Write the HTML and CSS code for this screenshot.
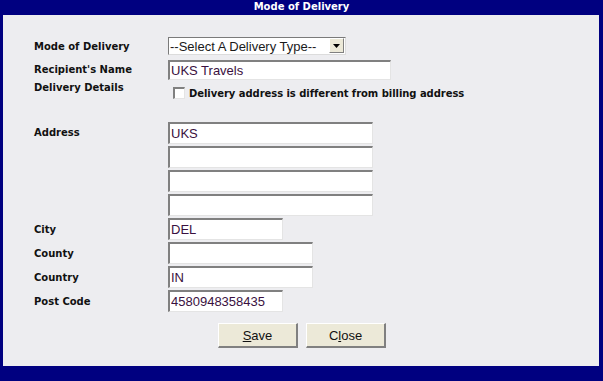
FILE: index.html
```html
<!DOCTYPE html>
<html lang="en">
<head>
    <meta charset="UTF-8">
    <title>Mode of Delivery</title>
    <link rel="stylesheet" href="styles.css">
</head>
<body>
    <div class="window">
        <div class="title-bar">Mode of Delivery</div>
        <form class="panel">
            <div class="row row-mode">
                <label class="field-label">Mode of Delivery</label>
                <div class="select-box">
                    <select name="delivery_type">
                        <option>--Select A Delivery Type--</option>
                    </select>
                    <span class="select-arrow">
                        <svg width="7" height="4" viewBox="0 0 7 4"><path d="M0 0h7L3.5 4z" fill="#000"/></svg>
                    </span>
                </div>
            </div>
            <div class="row row-name">
                <label class="field-label">Recipient's Name</label>
                <input type="text" class="text-input w-name" value="UKS Travels">
            </div>
            <div class="row row-details">
                <label class="field-label">Delivery Details</label>
                <div class="check-line">
                    <span class="checkbox"></span>
                    <span class="check-text">Delivery address is different from billing address</span>
                </div>
            </div>
            <div class="row row-address">
                <label class="field-label">Address</label>
                <div class="address-lines">
                    <input type="text" class="text-input w-address" value="UKS">
                    <input type="text" class="text-input w-address" value="">
                    <input type="text" class="text-input w-address" value="">
                    <input type="text" class="text-input w-address" value="">
                </div>
            </div>
            <div class="row row-field">
                <label class="field-label">City</label>
                <input type="text" class="text-input w-short" value="DEL">
            </div>
            <div class="row row-field">
                <label class="field-label">County</label>
                <input type="text" class="text-input w-mid" value="">
            </div>
            <div class="row row-field">
                <label class="field-label">Country</label>
                <input type="text" class="text-input w-mid" value="IN">
            </div>
            <div class="row row-field">
                <label class="field-label">Post Code</label>
                <input type="text" class="text-input w-short" value="4580948358435">
            </div>
            <div class="btn-row">
                <button type="button" class="btn"><u>S</u>ave</button>
                <button type="button" class="btn">C<u>l</u>ose</button>
            </div>
        </form>
        <div class="bottom-bar"></div>
    </div>
</body>
</html>
```

FILE: styles.css
```css
body {
    margin: 0;
    padding: 0;
    background-color: #ffffff;
    font-family: "DejaVu Sans", Verdana, sans-serif;
}
.window {
    width: 603px;
    height: 381px;
    display: flex;
    flex-direction: column;
    background-color: #000080;
}
.title-bar {
    height: 15px;
    line-height: 14px;
    text-align: center;
    color: white;
    font-weight: bold;
    font-size: 10px;
}
.panel {
    flex: 1;
    margin: 0 4px 0 3px;
    padding: 22px 0 0 31px;
    background-color: #ededf0;
    display: flex;
    flex-direction: column;
}
.row {
    display: flex;
    align-items: center;
}
.field-label {
    width: 134px;
    font-size: 10px;
    font-weight: bold;
    color: #111;
    flex-shrink: 0;
}
.row-mode {
    height: 18px;
    margin-bottom: 5px;
}
.row-name {
    height: 19px;
    margin-bottom: 4px;
}
.row-details {
    align-items: flex-start;
    height: 16px;
    margin-bottom: 23px;
}
.row-details .field-label {
    line-height: 10px;
}
.row-address {
    align-items: flex-start;
    margin-bottom: 2px;
}
.row-address .field-label {
    line-height: 22px;
}
.row-field {
    height: 22px;
    margin-bottom: 2px;
}
.select-box {
    width: 178px;
    height: 18px;
    box-sizing: border-box;
    display: flex;
    background: white;
    border-top: 1px solid #7a7a7a;
    border-left: 1px solid #7a7a7a;
    border-right: 1px solid #dcdcdc;
    border-bottom: 1px solid #dcdcdc;
}
.select-box select {
    flex: 1;
    appearance: none;
    -webkit-appearance: none;
    border: none;
    background: white;
    font-family: "Liberation Sans", Arial, sans-serif;
    font-size: 13px;
    color: #1a1a1a;
    padding: 0 0 0 1px;
    margin: 0;
    height: 16px;
    outline: none;
}
.select-arrow {
    width: 15px;
    height: 15px;
    margin: 0 1px 0 0;
    box-sizing: border-box;
    background: #ece9d8;
    border-top: 1px solid #ffffff;
    border-left: 1px solid #ffffff;
    border-right: 1px solid #808080;
    border-bottom: 1px solid #808080;
    display: flex;
    align-items: center;
    justify-content: center;
}
.text-input {
    box-sizing: border-box;
    height: 22px;
    margin: 0;
    padding: 0 2px 0 1px;
    background: white;
    border-top: 2px solid #808080;
    border-left: 2px solid #808080;
    border-right: 1px solid #e4e4e4;
    border-bottom: 1px solid #e4e4e4;
    font-family: "Liberation Sans", Arial, sans-serif;
    font-size: 13px;
    color: #3a1040;
    outline: none;
}
.row-name .text-input {
    height: 20px;
}
.w-name {
    width: 223px;
}
.w-address {
    width: 205px;
}
.w-short {
    width: 115px;
}
.w-mid {
    width: 145px;
}
.address-lines {
    display: flex;
    flex-direction: column;
    gap: 2px;
}
.check-line {
    display: flex;
    align-items: center;
    padding: 4px 0 0 5px;
}
.checkbox {
    width: 12px;
    height: 12px;
    box-sizing: border-box;
    background: white;
    border-top: 2px solid #808080;
    border-left: 2px solid #808080;
    border-right: 1px solid #e4e4e4;
    border-bottom: 1px solid #e4e4e4;
    margin-right: 4px;
}
.check-text {
    font-size: 10px;
    font-weight: bold;
    color: #111;
    letter-spacing: -0.05px;
}
.btn-row {
    display: flex;
    gap: 8px;
    margin: 9px 0 0 184px;
}
.btn {
    width: 80px;
    height: 25px;
    box-sizing: border-box;
    background-color: #ece9d8;
    border-top: 1px solid #ffffff;
    border-left: 1px solid #ffffff;
    border-right: 2px solid #808080;
    border-bottom: 2px solid #808080;
    font-family: "Liberation Sans", Arial, sans-serif;
    font-size: 13px;
    color: #111;
    padding: 0;
    cursor: pointer;
}
.bottom-bar {
    height: 15px;
}
```
